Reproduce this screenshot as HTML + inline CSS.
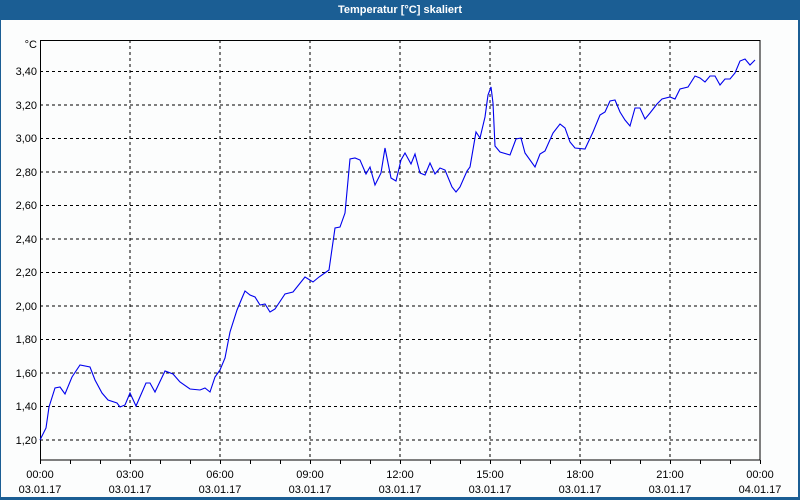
<!DOCTYPE html>
<html><head><meta charset="utf-8"><style>
html,body{margin:0;padding:0;width:800px;height:500px;overflow:hidden;background:#1b5e94}
svg{display:block}
text{font-family:"Liberation Sans","DejaVu Sans",sans-serif;font-size:11px;fill:#000}
</style></head><body>
<svg width="800" height="500" viewBox="0 0 800 500">
<rect x="0" y="0" width="800" height="500" fill="#1b5e94"/>
<rect x="1" y="20" width="797" height="477" fill="#fcfdfd"/>
<text x="400" y="13" text-anchor="middle" style="font-weight:bold;fill:#fff">Temperatur [°C] skaliert</text>
<g stroke="#000" stroke-width="1" stroke-dasharray="3,3" fill="none" shape-rendering="crispEdges">
<path d="M130 40V460M220 40V460M310 40V460M400 40V460M490 40V460M580 40V460M670 40V460"/>
<path d="M40 71.5H760M40 105H760M40 138.5H760M40 172H760M40 205.5H760M40 239H760M40 272.5H760M40 306H760M40 339.5H760M40 373H760M40 406.5H760M40 440H760"/>
</g>
<g stroke="#000" stroke-width="1" fill="none" shape-rendering="crispEdges">
<rect x="40.5" y="40.5" width="719.5" height="419.5"/>
<path d="M40.5 460v4M70.5 460v4M100.5 460v4M130.5 460v4M160.5 460v4M190.5 460v4M220.5 460v4M250.5 460v4M280.5 460v4M310.5 460v4M340.5 460v4M370.5 460v4M400.5 460v4M430.5 460v4M460.5 460v4M490.5 460v4M520.5 460v4M550.5 460v4M580.5 460v4M610.5 460v4M640.5 460v4M670.5 460v4M700.5 460v4M730.5 460v4M760.5 460v4"/>
</g>
<polyline fill="none" stroke="#0000ee" stroke-width="1.1" points="40,440 46,428 49,407 55,388 60,387 65,394 72,377 80,365 90,367 95,380 102,393 108,400 117,403 120,407 125,405 130,393 136,406 146,383 150,383 155,392 165,371 173,374 180,382 190,389 200,390 205,388 210,392 215,377 220,370 225,358 230,332 237,310 242,298 245,291 250,295 255,297 260,305 265,304 270,312 275,309 285,294 293,292 305,277 313,282 319,277 329,270 335,228 340,227 345,213 350,159 355,158 360,160 366,174 370,167 375,185 381,173 385,148 391,178 396,181 401,160 405,153 411,164 415,154 420,173 425,175 430,163 435,174 440,168 445,170 452,187 456,192 460,187 467,171 470,167 476,132 480,138 485,117 488,95 491,87 493,103 495,146 500,152 510,155 516,139 521,138 525,153 535,167 540,154 545,151 553,133 560,124 565,128 570,142 575,148 585,149 593,132 600,115 605,112 610,101 615,100 620,112 625,120 630,126 635,108 640,108 645,119 650,113 657,104 662,99 670,97 675,99 680,89 688,87 695,76 700,78 705,82 710,76 715,76 720,85 725,79 730,79 735,73 740,61 745,59 750,65 755,60"/>
<g text-anchor="end">
<text x="37" y="48">°C</text>
<text x="37" y="75">3,40</text>
<text x="37" y="109">3,20</text>
<text x="37" y="142">3,00</text>
<text x="37" y="176">2,80</text>
<text x="37" y="209">2,60</text>
<text x="37" y="243">2,40</text>
<text x="37" y="276">2,20</text>
<text x="37" y="310">2,00</text>
<text x="37" y="343">1,80</text>
<text x="37" y="377">1,60</text>
<text x="37" y="410">1,40</text>
<text x="37" y="444">1,20</text>
</g>
<g text-anchor="middle">
<text x="40" y="478">00:00</text><text x="40" y="493">03.01.17</text>
<text x="130" y="478">03:00</text><text x="130" y="493">03.01.17</text>
<text x="220" y="478">06:00</text><text x="220" y="493">03.01.17</text>
<text x="310" y="478">09:00</text><text x="310" y="493">03.01.17</text>
<text x="400" y="478">12:00</text><text x="400" y="493">03.01.17</text>
<text x="490" y="478">15:00</text><text x="490" y="493">03.01.17</text>
<text x="580" y="478">18:00</text><text x="580" y="493">03.01.17</text>
<text x="670" y="478">21:00</text><text x="670" y="493">03.01.17</text>
<text x="760" y="478">00:00</text><text x="760" y="493">04.01.17</text>
</g>
</svg>
</body></html>
